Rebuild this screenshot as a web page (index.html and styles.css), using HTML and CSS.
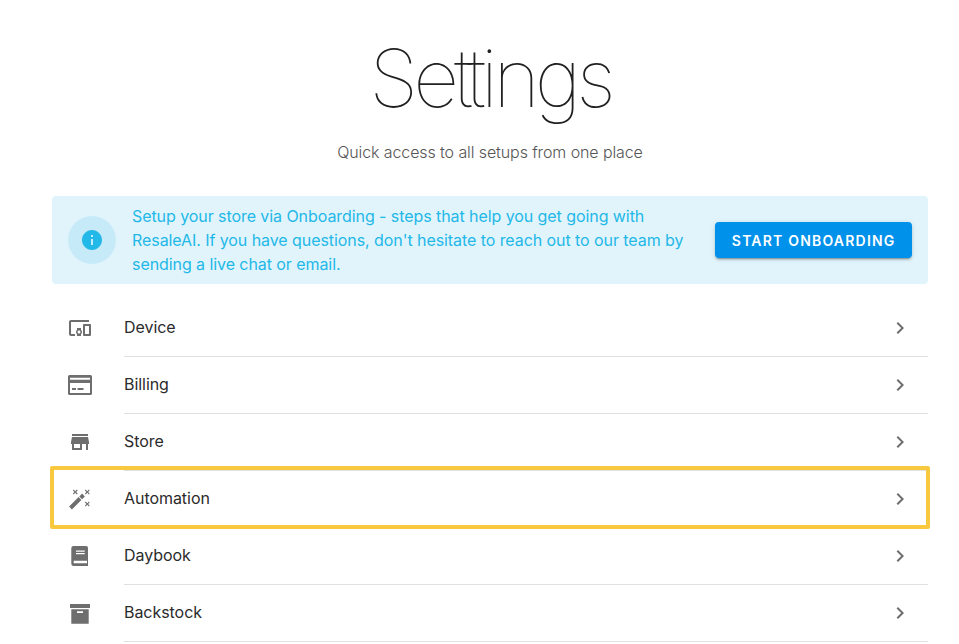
FILE: index.html
```html
<!DOCTYPE html>
<html lang="en">
<head>
    <meta charset="UTF-8">
    <meta name="viewport" content="width=device-width, initial-scale=1.0">
    <title>Settings</title>
    <link rel="stylesheet" href="styles.css">
</head>
<body>
    <div class="container">
        <h1 class="title">Settings</h1>
        <p class="subtitle">Quick access to all setups from one place</p>

        <div class="alert">
            <div class="alert-icon">
                <svg viewBox="0 0 24 24" width="24" height="24"><path d="M12 2C6.48 2 2 6.48 2 12s4.48 10 10 10 10-4.48 10-10S17.52 2 12 2zm1 15h-2v-6h2v6zm0-8h-2V7h2v2z"/></svg>
            </div>
            <p class="alert-text">Setup your store via Onboarding - steps that help you get going with ResaleAI. If you have questions, don't hesitate to reach out to our team by sending a live chat or email.</p>
            <button class="alert-btn">Start Onboarding</button>
        </div>

        <ul class="list">
            <li class="row">
                <svg class="row-icon" viewBox="0 0 24 24"><path d="M3 6h18V4H3c-1.1 0-2 .9-2 2v12c0 1.1.9 2 2 2h4v-2H3V6zm10 6H9v1.78c-.61.55-1 1.33-1 2.22s.39 1.67 1 2.22V20h4v-1.78c.61-.55 1-1.34 1-2.22s-.39-1.67-1-2.22V12zm-2 5.5c-.83 0-1.5-.67-1.5-1.5s.67-1.5 1.5-1.5 1.5.67 1.5 1.5-.67 1.5-1.5 1.5zM22 8h-6c-.5 0-1 .5-1 1v10c0 .5.5 1 1 1h6c.5 0 1-.5 1-1V9c0-.5-.5-1-1-1zm-1 10h-4v-8h4v8z"/></svg>
                <span class="row-label">Device</span>
                <svg class="row-arrow" viewBox="0 0 24 24"><path d="M10 6 8.59 7.41 13.17 12l-4.58 4.59L10 18l6-6z"/></svg>
            </li>
            <li class="row">
                <svg class="row-icon" viewBox="0 0 24 24"><path fill-rule="evenodd" d="M1.500 2h21A1.500 1.500 0 0 1 24 3.500v17a1.500 1.500 0 0 1-1.500 1.500h-21A1.500 1.500 0 0 1 0 20.500v-17A1.500 1.500 0 0 1 1.500 2zM2 4.700v2h20v-2zM2 10v10h20V10zm2 5h4v2H4zm5.500 0h6v2h-6z"/></svg>
                <span class="row-label">Billing</span>
                <svg class="row-arrow" viewBox="0 0 24 24"><path d="M10 6 8.59 7.41 13.17 12l-4.58 4.59L10 18l6-6z"/></svg>
            </li>
            <li class="row">
                <svg class="row-icon" viewBox="0 0 24 24"><path d="M20 4H4v2h16V4zm1 10v-2l-1-5H4l-1 5v2h1v6h10v-6h4v6h2v-6h1zm-9 4H6v-4h6v4z"/></svg>
                <span class="row-label">Store</span>
                <svg class="row-arrow" viewBox="0 0 24 24"><path d="M10 6 8.59 7.41 13.17 12l-4.58 4.59L10 18l6-6z"/></svg>
            </li>
            <li class="row row-highlight">
                <svg class="row-icon" viewBox="0 0 24 24"><path d="M1.100 19.600 10.600 10.100l2.800 2.800-9.500 9.500zM11.300 9.400l2.800-2.800 2.800 2.800-2.800 2.800zM5.700 2.600l1.600 1.600 1.600-1.600.8.800-1.600 1.600 1.600 1.600-.8.800-1.600-1.600-1.600 1.600-.8-.8L6.500 5 4.900 3.400zM17.700 2.600l1.600 1.600 1.600-1.600.8.800-1.600 1.600 1.600 1.600-.8.800-1.600-1.600-1.600 1.600-.8-.8L18.500 5l-1.600-1.600zM17.700 14.600l1.600 1.600 1.600-1.600.8.800-1.600 1.600 1.600 1.600-.8.800-1.600-1.600-1.600 1.600-.8-.8 1.600-1.600-1.600-1.600z"/></svg>
                <span class="row-label">Automation</span>
                <svg class="row-arrow" viewBox="0 0 24 24"><path d="M10 6 8.59 7.41 13.17 12l-4.58 4.59L10 18l6-6z"/></svg>
            </li>
            <li class="row">
                <svg class="row-icon" viewBox="0 0 24 24"><path fill-rule="evenodd" d="M5.500 2H18a2 2 0 0 1 2 2v18H6a2.500 2.500 0 0 1-2.700-2.500V4.200A2.200 2.200 0 0 1 5.500 2zM8 6.500v1.300h8.700V6.500zM8 9v1.300h8.700V9zM5.700 16.700v2.600H19v-2.600z"/></svg>
                <span class="row-label">Daybook</span>
                <svg class="row-arrow" viewBox="0 0 24 24"><path d="M10 6 8.59 7.41 13.17 12l-4.58 4.59L10 18l6-6z"/></svg>
            </li>
            <li class="row">
                <svg class="row-icon" viewBox="0 0 24 24"><path fill-rule="evenodd" d="M2 3h20v4H2zM3.300 8.300h17.400v14.400H3.300zM9 10.300V12h6v-1.700z"/></svg>
                <span class="row-label">Backstock</span>
                <svg class="row-arrow" viewBox="0 0 24 24"><path d="M10 6 8.59 7.41 13.17 12l-4.58 4.59L10 18l6-6z"/></svg>
            </li>
        </ul>
    </div>
</body>
</html>
```

FILE: styles.css
```css
html, body {
    height: 644px;
    overflow: hidden;
}
body {
    margin: 0;
    background: #fff;
    font-family: Inter, sans-serif;
    color: #212121;
}
.container {
    width: 876px;
    margin-left: 52px;
}
.title {
    margin: 0;
    padding-top: 30px;
    font-size: 80px;
    font-weight: 100;
    line-height: 96px;
    letter-spacing: -5px;
    text-align: center;
}
.subtitle {
    margin: 14px 0 32px;
    font-size: 16px;
    font-weight: 300;
    line-height: 24px;
    letter-spacing: -0.1px;
    text-align: center;
    color: #555;
}
.alert {
    display: flex;
    align-items: center;
    height: 88px;
    padding: 0 16px;
    box-sizing: border-box;
    background: #e1f4fc;
    border-radius: 4px;
}
.alert-icon {
    display: flex;
    align-items: center;
    justify-content: center;
    flex: none;
    width: 48px;
    height: 48px;
    margin-right: 16px;
    border-radius: 50%;
    background: #c6eaf8;
}
.alert-icon svg {
    fill: #22b8e8;
}
.alert-text {
    flex: 1;
    margin: 0;
    padding-right: 20px;
    font-size: 16px;
    line-height: 24px;
    letter-spacing: -0.07px;
    color: #22b8e8;
}
.alert-btn {
    flex: none;
    height: 36px;
    padding: 0 16.5px;
    border: none;
    border-radius: 4px;
    background: #0091ea;
    color: #fff;
    font-family: inherit;
    font-size: 14px;
    font-weight: 600;
    letter-spacing: 1.2px;
    text-transform: uppercase;
    box-shadow: 0 3px 1px -2px rgba(0,0,0,.2), 0 2px 2px 0 rgba(0,0,0,.14), 0 1px 5px 0 rgba(0,0,0,.12);
}
.list {
    margin: 16px 0 0;
    padding: 0;
    list-style: none;
}
.row {
    position: relative;
    display: flex;
    align-items: center;
    height: 57px;
    padding-bottom: 2px;
    box-sizing: border-box;
}
.row::after {
    content: "";
    position: absolute;
    left: 72px;
    right: 0;
    bottom: 0;
    height: 1px;
    background: #e0e0e0;
}
.row-highlight::before {
    content: "";
    position: absolute;
    z-index: 1;
    left: -2px;
    right: -2px;
    top: -5px;
    bottom: -1px;
    border: 4px solid #f8c93e;
    border-radius: 2px;
}
.row-icon {
    flex: none;
    width: 24px;
    height: 24px;
    margin-left: 16px;
    fill: #6e6e6e;
}
.row-label {
    flex: 1;
    margin-left: 32px;
    padding-bottom: 1px;
    font-size: 16px;
    letter-spacing: -0.05px;
    color: #2b2b2b;
}
.row-arrow {
    flex: none;
    width: 24px;
    height: 24px;
    margin-right: 16px;
    fill: #6e6e6e;
}
```
